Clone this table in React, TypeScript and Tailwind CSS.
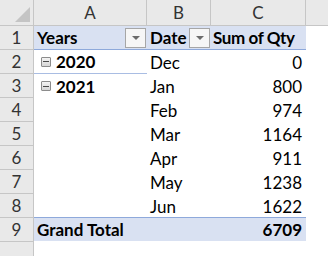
const font = { fontFamily: "Lato, 'Liberation Sans', sans-serif" };

const months = [
    { year: "2020", month: "Dec", qty: "0" },
    { year: "2021", month: "Jan", qty: "800" },
    { year: "", month: "Feb", qty: "974" },
    { year: "", month: "Mar", qty: "1164" },
    { year: "", month: "Apr", qty: "911" },
    { year: "", month: "May", qty: "1238" },
    { year: "", month: "Jun", qty: "1622" }
];

export default function App() {
    return (
        <div className="h-[256px] w-[328px] overflow-hidden bg-white text-[17px] leading-none text-black" style={font}>
            {/* column letters */}
            <div className="flex h-[26px]">
                <div className="relative w-[34px] shrink-0 border-r border-b border-[#c6c6c6] bg-[#e9e9e9]">
                    <div className="absolute right-[3px] bottom-[3px] h-0 w-0 border-b-[15px] border-l-[15px] border-b-[#c4c4c4] border-l-transparent" />
                </div>
                <ColHead className="w-[113px]" label="A" />
                <ColHead className="w-[64px]" label="B" />
                <ColHead className="w-[95px]" label="C" />
                <div className="flex-1 border-b border-[#c6c6c6] bg-[#e9e9e9]" />
            </div>

            {/* pivot header */}
            <div className="flex h-[24px]">
                <RowHead n={1} />
                <div className="flex h-full w-[272px] border-b border-[#8ea9db] bg-[#d9e1f2] font-bold">
                    <div className="flex w-[113px] items-center justify-between pl-[3px] pr-px">
                        <span>Years</span>
                        <FilterButton />
                    </div>
                    <div className="flex w-[64px] items-center justify-between pl-[3px] pr-px">
                        <span>Date</span>
                        <FilterButton />
                    </div>
                    <div className="flex w-[95px] items-center pl-[2px] tracking-[-0.4px]">Sum of Qty</div>
                </div>
            </div>

            {months.map((r, i) => (
                <div key={i} className="flex h-[24px]">
                    <RowHead n={i + 2} />
                    <div
                        className={
                            "flex w-[113px] items-center gap-[5px] pl-[7px] font-bold " +
                            (i === 0 ? "border-b border-[#a9bde3]" : "")
                        }
                    >
                        {r.year && (
                            <>
                                <Collapse />
                                <span>{r.year}</span>
                            </>
                        )}
                    </div>
                    <div className="flex w-[64px] items-center pl-[3px]">{r.month}</div>
                    <div className="flex w-[95px] items-center justify-end pr-[4px]">{r.qty}</div>
                </div>
            ))}

            {/* grand total */}
            <div className="flex h-[24px]">
                <RowHead n={9} />
                <div className="-mt-px flex h-[24px] w-[272px] items-center justify-between border-t border-[#8ea9db] bg-[#d9e1f2] pl-[3px] pr-[4px] font-bold">
                    <span>Grand Total</span>
                    <span>6709</span>
                </div>
            </div>

            <div className="flex h-[24px]">
                <RowHead n={10} />
            </div>
        </div>
    );
}

function ColHead({ className, label }: { className: string; label: string }) {
    return (
        <div
            className={
                className +
                " flex shrink-0 items-center justify-center border-r border-b border-[#c6c6c6] bg-[#e9e9e9] text-[#333]"
            }
        >
            {label}
        </div>
    );
}

function RowHead({ n }: { n: number }) {
    return (
        <div className="flex h-[24px] w-[34px] shrink-0 items-center justify-center border-r border-b border-[#c6c6c6] bg-[#e9e9e9] text-[#333]">
            {n === 10 ? "" : n}
        </div>
    );
}

function FilterButton() {
    return (
        <div className="flex h-[20px] w-[21px] shrink-0 items-center justify-center border border-[#a6a6a6] bg-[#f6f6f6]">
            <div className="h-0 w-0 border-x-[4px] border-t-[4px] border-x-transparent border-t-[#6b6b6b]" />
        </div>
    );
}

function Collapse() {
    return (
        <div className="flex h-[10px] w-[10px] shrink-0 items-center justify-center rounded-[1px] border border-[#8c8c8c] bg-gradient-to-b from-[#f4f4f4] to-[#d6d6d6]">
            <div className="h-px w-[6px] bg-[#4a4a4a]" />
        </div>
    );
}
